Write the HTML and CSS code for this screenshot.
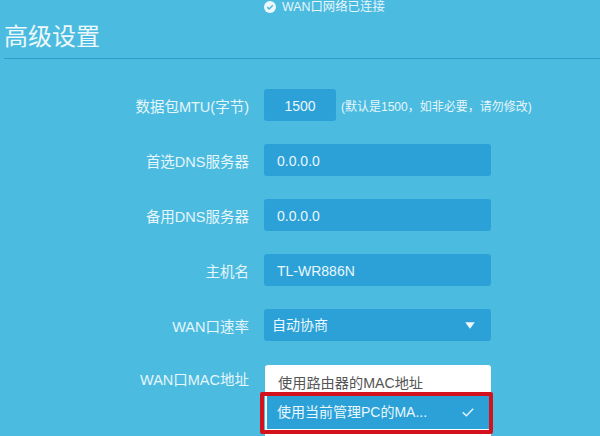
FILE: index.html
```html
<!DOCTYPE html>
<html lang="zh-CN">
<head>
<meta charset="utf-8">
<title>高级设置</title>
<link rel="stylesheet" href="styles.css">
</head>
<body>
<div class="page">
  <div class="status">
    <svg class="status-icon" width="12" height="12" viewBox="0 0 12 12"><circle cx="6" cy="6" r="6" fill="#eef8fb"/><path d="M3.2 6.1 5.2 8 8.8 4.3" fill="none" stroke="#4bbbe0" stroke-width="1.6"/></svg>
    <span>WAN口网络已连接</span>
  </div>
  <h1 class="title">高级设置</h1>
  <div class="form">
    <div class="row">
      <label class="label">数据包MTU(字节)</label>
      <div class="field field-short">1500</div>
      <span class="hint">(默认是1500，如非必要，请勿修改)</span>
    </div>
    <div class="row">
      <label class="label">首选DNS服务器</label>
      <div class="field">0.0.0.0</div>
    </div>
    <div class="row">
      <label class="label">备用DNS服务器</label>
      <div class="field">0.0.0.0</div>
    </div>
    <div class="row">
      <label class="label">主机名</label>
      <div class="field">TL-WR886N</div>
    </div>
    <div class="row">
      <label class="label">WAN口速率</label>
      <div class="field field-select">自动协商<svg width="10" height="7" viewBox="0 0 10 7"><path d="M0.2 0.3H9.8L5 6.8Z" fill="#eef8fb"/></svg></div>
    </div>
    <div class="row row-mac">
      <label class="label label-mac">WAN口MAC地址</label>
      <div class="menu">
        <div class="option">使用路由器的MAC地址</div>
        <div class="option option-selected">使用当前管理PC的MA...<svg width="12" height="9" viewBox="0 0 12 9"><path d="M0.8 4.4 4.4 7.8 11.2 0.8" fill="none" stroke="#e0f3fa" stroke-width="1.5"/></svg></div>
        <div class="highlight"></div>
      </div>
    </div>
  </div>
</div>
</body>
</html>
```
FILE: styles.css
```css
* { box-sizing: border-box; }
html, body { margin: 0; padding: 0; }
body {
  width: 600px;
  height: 436px;
  overflow: hidden;
  background: #4bbbe0;
  font-family: "Liberation Sans", "Noto Sans CJK SC", sans-serif;
  color: #e6f6fb;
}
.page { width: 600px; height: 436px; overflow: hidden; }
.status {
  display: flex;
  align-items: center;
  gap: 6px;
  height: 14px;
  padding-left: 264px;
  font-size: 12.4px;
  line-height: 14px;
  color: #e6f6fb;
}
.status-icon { flex: none; }
.title {
  margin: 8px 0 0 4px;
  padding: 0;
  height: 37px;
  border-bottom: 1px solid #2a9fcc;
  font-size: 24px;
  font-weight: 400;
  line-height: 30px;
  color: #eef9fc;
}
.form {
  display: flex;
  flex-direction: column;
  gap: 23px;
  padding-top: 30px;
}
.row {
  display: flex;
  align-items: center;
  height: 32px;
}
.label {
  flex: none;
  width: 249px;
  text-align: right;
  font-size: 14.5px;
  color: #e6f6fb;
}
.field {
  flex: none;
  width: 227px;
  height: 32px;
  margin-left: 15px;
  padding-left: 13px;
  border-radius: 3px;
  background: #2ba1d8;
  font-size: 14px;
  line-height: 34px;
  color: #eaf7fc;
}
.field-short {
  width: 72px;
  padding-left: 0;
  text-align: center;
  font-size: 14px;
}
.field-select {
  display: flex;
  align-items: center;
  justify-content: space-between;
  padding: 0 16px 0 8px;
  font-size: 14px;
}
.hint {
  margin-left: 5px;
  font-size: 12px;
  white-space: nowrap;
  color: #e6f6fb;
}
.row-mac { align-items: flex-start; height: 70px; margin-top: 1px; }
.label-mac { line-height: 30px; }
.menu {
  position: relative;
  flex: none;
  width: 226px;
  height: 72px;
  margin-left: 16px;
  padding: 0 2px;
  border-radius: 3px 3px 0 0;
  background: #fff;
}
.option {
  margin: 0 -2px;
  height: 31px;
  padding: 5px 0 0 13px;
  font-size: 14.2px;
  line-height: 26px;
  color: #555;
}
.option-selected {
  display: flex;
  align-items: center;
  justify-content: space-between;
  height: 33px;
  margin: 0;
  padding: 0 15px 0 10px;
  background: #2ba1d8;
  font-size: 14px;
  line-height: 33px;
  color: #eaf7fc;
}
.highlight {
  position: absolute;
  left: -5px;
  top: 27px;
  width: 233px;
  height: 42px;
  border: 4px solid #d4121e;
  border-radius: 2px;
}
```
